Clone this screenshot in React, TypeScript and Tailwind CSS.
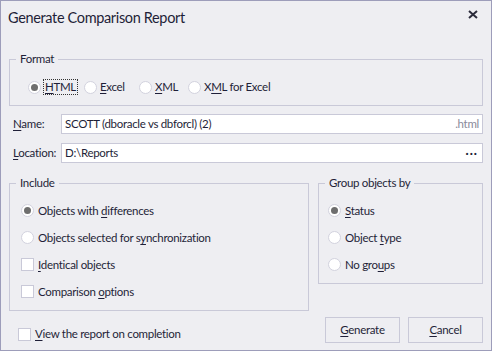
import React from 'react';

const font = "font-['Lato','Segoe_UI',sans-serif]";

const U = ({ children }: { children: React.ReactNode }) => <span className="underline underline-offset-2">{children}</span>;

const Radio = ({ checked }: { checked?: boolean }) => (
  <span className="w-[13px] h-[13px] rounded-full bg-white border border-[#d2d2de] flex items-center justify-center shrink-0">
    {checked && <span className="w-[7px] h-[7px] rounded-full bg-[#6e6e6e]" />}
  </span>
);

const Check = () => <span className="w-[13px] h-[13px] bg-white border border-[#c9c9d8] shrink-0" />;

const GroupBox = ({ title, className, children }: { title: string; className: string; children: React.ReactNode }) => (
  <div className={`relative border border-[#c9c9d8] ${className}`}>
    <span className="absolute left-[6px] top-[-9px] px-[4px] bg-[#eeeef2] leading-[16px]">{title}</span>
    {children}
  </div>
);

const Option = ({ kind, checked, children }: { kind: 'radio' | 'check'; checked?: boolean; children: React.ReactNode }) => (
  <div className="h-[27px] flex items-center gap-[4px]">
    {kind === 'radio' ? <Radio checked={checked} /> : <Check />}
    <span>{children}</span>
  </div>
);

export default function App() {
  return (
    <div className={`w-[492px] h-[351px] border border-[#9d9dba] bg-[#eeeef2] text-[#1f1f38] text-[11.5px] tracking-[-0.3px] flex flex-col px-[8px] ${font}`}>
      {/* Title */}
      <div className="relative pt-[7px]">
        <div className="h-[20px] leading-[20px] text-[14.5px] tracking-[-0.35px] -ml-[1px]">Generate Comparison Report</div>
        <svg className="absolute right-[5px] top-[9px]" width="10" height="9" viewBox="0 0 10 9">
          <path d="M1 1 L9 8 M9 1 L1 8" stroke="#2a2a3a" strokeWidth="2" />
        </svg>
      </div>

      {/* Format */}
      <GroupBox title="Format" className="mt-[31px] h-[47px]">
        <div className="flex items-center pt-[19px] pl-[18px] h-[16px] box-content">
          <div className="w-[56px] flex items-center gap-[3px]">
            <Radio checked />
            <span className="outline outline-1 outline-dotted outline-[#333] px-[1px] leading-[14px]"><U>H</U>TML</span>
          </div>
          <div className="w-[55px] flex items-center gap-[3px]">
            <Radio />
            <span><U>E</U>xcel</span>
          </div>
          <div className="w-[49px] flex items-center gap-[3px]">
            <Radio />
            <span><U>X</U>ML</span>
          </div>
          <div className="flex items-center gap-[3px]">
            <Radio />
            <span>X<U>M</U>L for Excel</span>
          </div>
        </div>
      </GroupBox>

      {/* Name / Location */}
      <div className="mt-[8px] flex items-center">
        <span className="w-[52px] pl-[4px] whitespace-nowrap"><U>N</U>ame:</span>
        <div className="flex-1 h-[20px] bg-white border border-[#c9c9d8] flex items-center justify-between px-[3px]">
          <span>SCOTT (dboracle vs dbforcl) (2)</span>
          <span className="text-[#8a8a9a]">.html</span>
        </div>
      </div>
      <div className="mt-[9px] flex items-center">
        <span className="w-[52px] pl-[4px] whitespace-nowrap"><U>L</U>ocation:</span>
        <div className="flex-1 h-[20px] bg-white border border-[#c9c9d8] flex items-center justify-between px-[3px]">
          <span>D:\Reports</span>
          <span className="font-bold tracking-[1px] leading-[8px] pr-[1px]">···</span>
        </div>
      </div>

      {/* Include / Group */}
      <div className="mt-[20px] flex gap-[9px] items-start">
        <GroupBox title="Include" className="w-[300px] h-[128px] pt-[13px] pl-[11px]">
          <Option kind="radio" checked>Objects with <U>d</U>ifferences</Option>
          <Option kind="radio">Objects selected for s<U>y</U>nchronization</Option>
          <Option kind="check"><U>I</U>dentical objects</Option>
          <Option kind="check">Comparison <U>o</U>ptions</Option>
        </GroupBox>
        <GroupBox title="Group objects by" className="flex-1 h-[101px] pt-[13px] pl-[9px]">
          <Option kind="radio" checked><U>S</U>tatus</Option>
          <Option kind="radio">Object <U>t</U>ype</Option>
          <Option kind="radio">No gro<U>u</U>ps</Option>
        </GroupBox>
      </div>

      {/* Bottom */}
      <div className="mt-[6px] flex items-center">
        <div className="flex items-center gap-[4px] ml-[9px] mt-[8px]">
          <Check />
          <span><U>V</U>iew the report on completion</span>
        </div>
        <div className="ml-auto flex gap-[8px]">
          <button className="w-[75px] h-[26px] border border-[#c9c9d8] bg-[#eeeef2]"><U>G</U>enerate</button>
          <button className="w-[75px] h-[26px] border border-[#c9c9d8] bg-[#eeeef2]"><U>C</U>ancel</button>
        </div>
      </div>
    </div>
  );
}
